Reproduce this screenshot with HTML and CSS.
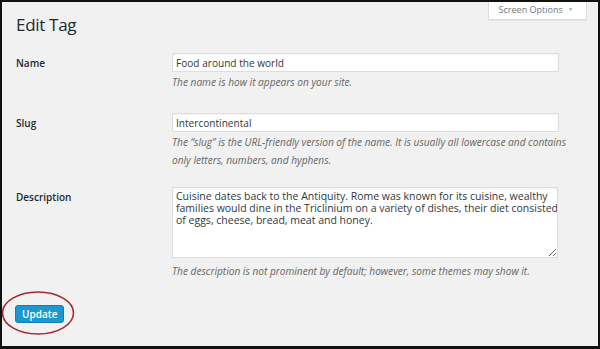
FILE: index.html
```html
<!DOCTYPE html>
<html lang="en">
<head>
<meta charset="utf-8">
<title>Edit Tag</title>
<link rel="stylesheet" href="styles.css">
</head>
<body>
<div class="frame">
  <div class="wrap">
    <button class="screen-options" type="button">Screen Options <span class="arrow">▼</span></button>
    <h1 class="title">Edit Tag</h1>
    <form class="form-table">
      <div class="row row-name">
        <label class="label" for="name">Name</label>
        <div class="field">
          <input class="text-input" id="name" type="text" value="Food around the world">
          <p class="description">The name is how it appears on your site.</p>
        </div>
      </div>
      <div class="row row-slug">
        <label class="label" for="slug">Slug</label>
        <div class="field">
          <input class="text-input" id="slug" type="text" value="Intercontinental">
          <p class="description">The “slug” is the URL-friendly version of the name. It is usually all lowercase and contains only letters, numbers, and hyphens.</p>
        </div>
      </div>
      <div class="row row-desc">
        <label class="label" for="desc">Description</label>
        <div class="field">
          <textarea class="textarea" id="desc" wrap="off">Cuisine dates back to the Antiquity. Rome was known for its cuisine, wealthy
families would dine in the Triclinium on a variety of dishes, their diet consisted
of eggs, cheese, bread, meat and honey.</textarea>
          <p class="description description-desc">The description is not prominent by default; however, some themes may show it.</p>
        </div>
      </div>
      <div class="submit">
        <button class="button-primary" type="button">Update</button>
        <svg class="circle" width="76" height="48" viewBox="0 0 76 48" aria-hidden="true">
          <ellipse cx="37" cy="23" rx="35.5" ry="21" fill="none" stroke="#a52a30" stroke-width="1.6"/>
        </svg>
      </div>
    </form>
  </div>
</div>
</body>
</html>
```

FILE: styles.css
```css
html, body {
  margin: 0;
  padding: 0;
  background: #ffffff;
}

.frame {
  width: 600px;
  height: 349px;
  box-sizing: border-box;
  border: 2px solid #111111;
  border-bottom-width: 3px;
  background: #f1f1f1;
  overflow: hidden;
  font-family: "Open Sans", "Noto Sans", sans-serif;
  color: #23282d;
}

.wrap {
  padding: 0 11px 0 14px;
}

.screen-options {
  float: right;
  margin: 0;
  padding: 0 13px 2px 10px;
  height: 18px;
  box-sizing: border-box;
  border: 1px solid #dddddd;
  border-top: 0;
  background: #ffffff;
  box-shadow: 0 1px 1px rgba(0, 0, 0, 0.04);
  font-family: "Open Sans", "Noto Sans", sans-serif;
  font-size: 9px;
  line-height: 15px;
  color: #72777c;
}

.arrow {
  font-size: 5px;
  color: #a0a5aa;
  margin-left: 3px;
  vertical-align: 2px;
}

.title {
  margin: 0;
  padding-top: 11px;
  font-size: 17px;
  font-weight: 400;
  line-height: 23px;
  letter-spacing: -0.3px;
  color: #23282d;
}

.form-table {
  margin-top: 17px;
}

.row {
  display: flex;
  align-items: flex-start;
}

.row-slug {
  margin-top: 22px;
}

.row-desc {
  margin-top: 18px;
}

.label {
  width: 156px;
  flex: none;
  font-size: 10px;
  font-weight: 600;
  line-height: 20px;
  color: #23282d;
}

.field {
  width: 407px;
  flex: none;
}

.text-input {
  display: block;
  width: 387px;
  height: 19px;
  box-sizing: border-box;
  margin: 0;
  padding: 0 3px;
  border: 1px solid #dddddd;
  box-shadow: inset 0 1px 2px rgba(0, 0, 0, 0.05);
  background: #ffffff;
  font-family: "Open Sans", "Noto Sans", sans-serif;
  font-size: 10.1px;
  color: #32373c;
  outline: none;
}

.description {
  margin: 1px 0 0;
  font-size: 10.15px;
  font-style: italic;
  line-height: 18px;
  color: #666666;
}

.description-desc {
  margin-top: 4px;
}

.textarea {
  display: block;
  width: 386px;
  height: 71px;
  box-sizing: border-box;
  margin: 0;
  padding: 2px 0 2px 3px;
  border: 1px solid #dddddd;
  box-shadow: inset 0 1px 2px rgba(0, 0, 0, 0.05);
  background: #ffffff;
  font-family: "Open Sans", "Noto Sans", sans-serif;
  font-size: 10.5px;
  line-height: 12.2px;
  color: #32373c;
  white-space: pre;
  overflow: hidden;
  outline: none;
}

.submit {
  position: relative;
  margin-top: 25px;
  margin-left: -1px;
}

.button-primary {
  display: block;
  height: 18px;
  box-sizing: border-box;
  margin: 0;
  padding: 0 6px;
  border: 1px solid #0f80b5;
  border-radius: 3px;
  background: #1b98d0;
  font-family: "Open Sans", "Noto Sans", sans-serif;
  font-size: 10px;
  font-weight: 600;
  line-height: 16px;
  color: #ffffff;
}

.circle {
  position: absolute;
  left: -14px;
  top: -15px;
}
```
